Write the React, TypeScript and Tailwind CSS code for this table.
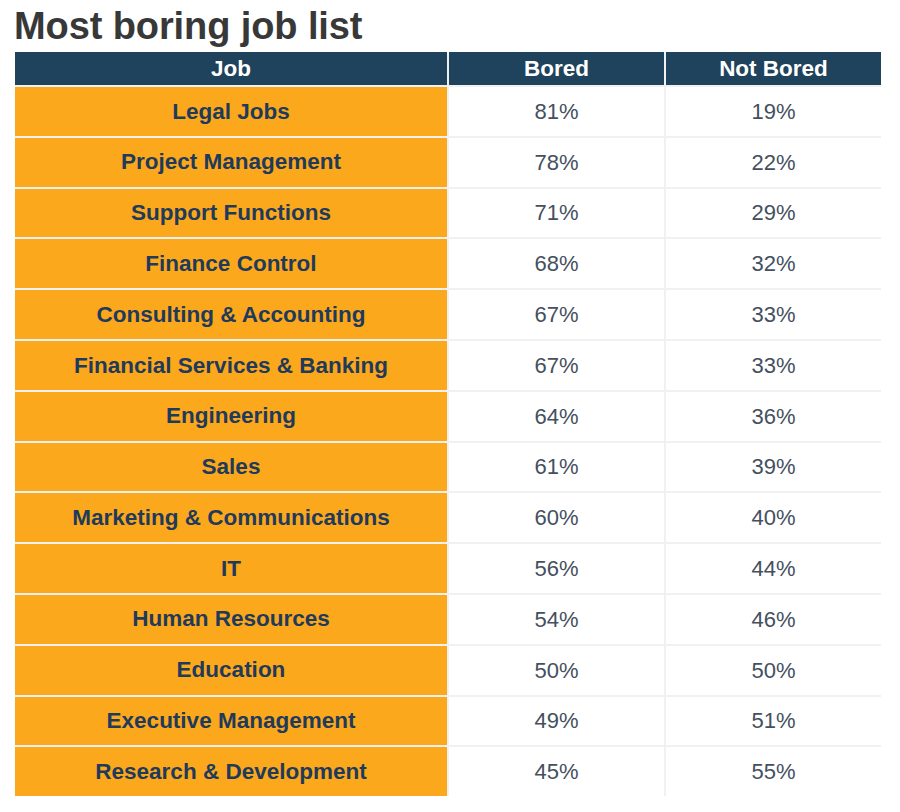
const rows: [string, number][] = [
  ["Legal Jobs", 81],
  ["Project Management", 78],
  ["Support Functions", 71],
  ["Finance Control", 68],
  ["Consulting & Accounting", 67],
  ["Financial Services & Banking", 67],
  ["Engineering", 64],
  ["Sales", 61],
  ["Marketing & Communications", 60],
  ["IT", 56],
  ["Human Resources", 54],
  ["Education", 50],
  ["Executive Management", 49],
  ["Research & Development", 45],
];

export default function App() {
  return (
    <div className="h-[812px] w-[900px] bg-white font-['Liberation_Sans',Arial,sans-serif]">
      <h1 className="pl-[14px] pt-[6px] text-[38px] font-bold leading-[40px] tracking-[-0.1px] text-[#383838]">
        Most boring job list
      </h1>

      <div className="ml-[15px] mt-[6px] grid w-[866px] grid-cols-[432px_215px_215px] gap-[2px] bg-[#f1f1f1]">
        {["Job", "Bored", "Not Bored"].map((h) => (
          <div
            key={h}
            className="flex h-[33px] items-center justify-center bg-[#1f435c] text-[22.5px] font-bold text-white"
          >
            {h}
          </div>
        ))}

        {rows.map(([job, bored]) => (
          <div key={job} className="contents">
            <div className="flex h-[48.8px] items-center justify-center bg-[#fca81c] text-[22.5px] font-bold text-[#1f3a5a]">
              {job}
            </div>
            <div className="flex h-[48.8px] items-center justify-center bg-white text-[22px] text-[#44505e]">
              {bored}%
            </div>
            <div className="flex h-[48.8px] items-center justify-center bg-white text-[22px] text-[#44505e]">
              {100 - bored}%
            </div>
          </div>
        ))}
      </div>
    </div>
  );
}
